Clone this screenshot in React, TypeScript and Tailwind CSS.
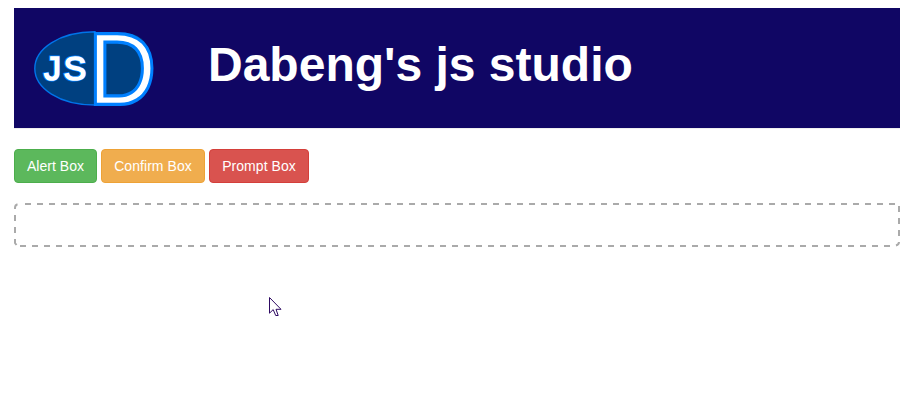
function Logo() {
  return (
    <svg width="120" height="76" viewBox="34 31 120 76" className="block overflow-visible" role="img">
      <path
        d="M95 31.8C59 31.8 34.8 49 34.8 68.5S59 105 95 105Z"
        fill="#004080"
        stroke="#0074ea"
        strokeWidth="1.4"
      />
      <path d="M96 33H124C143 33 152 47 152 68.5S143 104 124 104H96Z" fill="#004080" />
      <g fontFamily="'Liberation Sans', Arial, sans-serif" fill="#fff" strokeLinejoin="miter">
        <g fontSize="34">
          <text x="43.9" y="80" stroke="#0080ff" strokeWidth="3">J</text>
          <text x="63.4" y="80" stroke="#0080ff" strokeWidth="3">S</text>
          <text x="43.9" y="80" stroke="#fff" strokeWidth="1.6">J</text>
          <text x="63.4" y="80" stroke="#fff" strokeWidth="1.6">S</text>
        </g>
        <g fontSize="102" stroke="#0080ff" transform="translate(88 103.5) scale(.925 1)">
          <text strokeWidth="4">D</text>
          <text strokeWidth="2.5">D</text>
        </g>
      </g>
    </svg>
  );
}

function Pointer() {
  return (
    <svg width="13" height="20" viewBox="0 0 13 20" className="absolute left-[269px] top-[297px]">
      <path d="M.5 .5V16.2L4.2 12.6L6.7 18.5H9.2L7 12.3H12Z" fill="#fff" stroke="#2e0a62" />
    </svg>
  );
}

function DashedFrame() {
  return (
    <svg width="886" height="44" viewBox="0 0 886 44" className="block" fill="none" stroke="#aaa" strokeWidth="2">
      <g strokeDasharray="6 6">
        <path d="M11 1H882" />
        <path d="M6 43H877" />
        <path d="M1 12V36" />
        <path d="M885 3V34" />
      </g>
      <path d="M1 6V5Q1 2 3.5 1.3M1 36V40L2.5 42M882 42.5Q885 41.5 885 39" />
    </svg>
  );
}

const buttons = [
  { label: "Alert Box", style: "w-[83px] bg-[#5cb85c] border-[#4cae4c]" },
  { label: "Confirm Box", style: "w-[104px] bg-[#f0ad4e] border-[#eea236]" },
  { label: "Prompt Box", style: "w-[100px] bg-[#d9534f] border-[#d43f3a]" },
];

export default function App() {
  return (
    <main className="relative h-[419px] w-[914px] overflow-hidden bg-white px-3.5 pt-2 font-['Liberation_Sans',Arial,sans-serif]">
      <header className="flex h-[121px] items-start border-b border-[#eee] bg-[#100664] bg-clip-padding pl-5 pt-[23px]">
        <Logo />
        <h1 className="ml-[54px] mt-[7px] whitespace-nowrap text-[48px] font-bold leading-[53px] text-white">
          Dabeng's js studio
        </h1>
      </header>
      <div className="mt-5 flex gap-1">
        {buttons.map((b) => (
          <button
            key={b.label}
            type="button"
            className={`h-[34px] whitespace-nowrap rounded border text-center text-sm leading-5 tracking-[0.05px] text-white ${b.style}`}
          >
            {b.label}
          </button>
        ))}
      </div>
      <div className="mt-5 h-11">
        <DashedFrame />
      </div>
      <Pointer />
    </main>
  );
}
